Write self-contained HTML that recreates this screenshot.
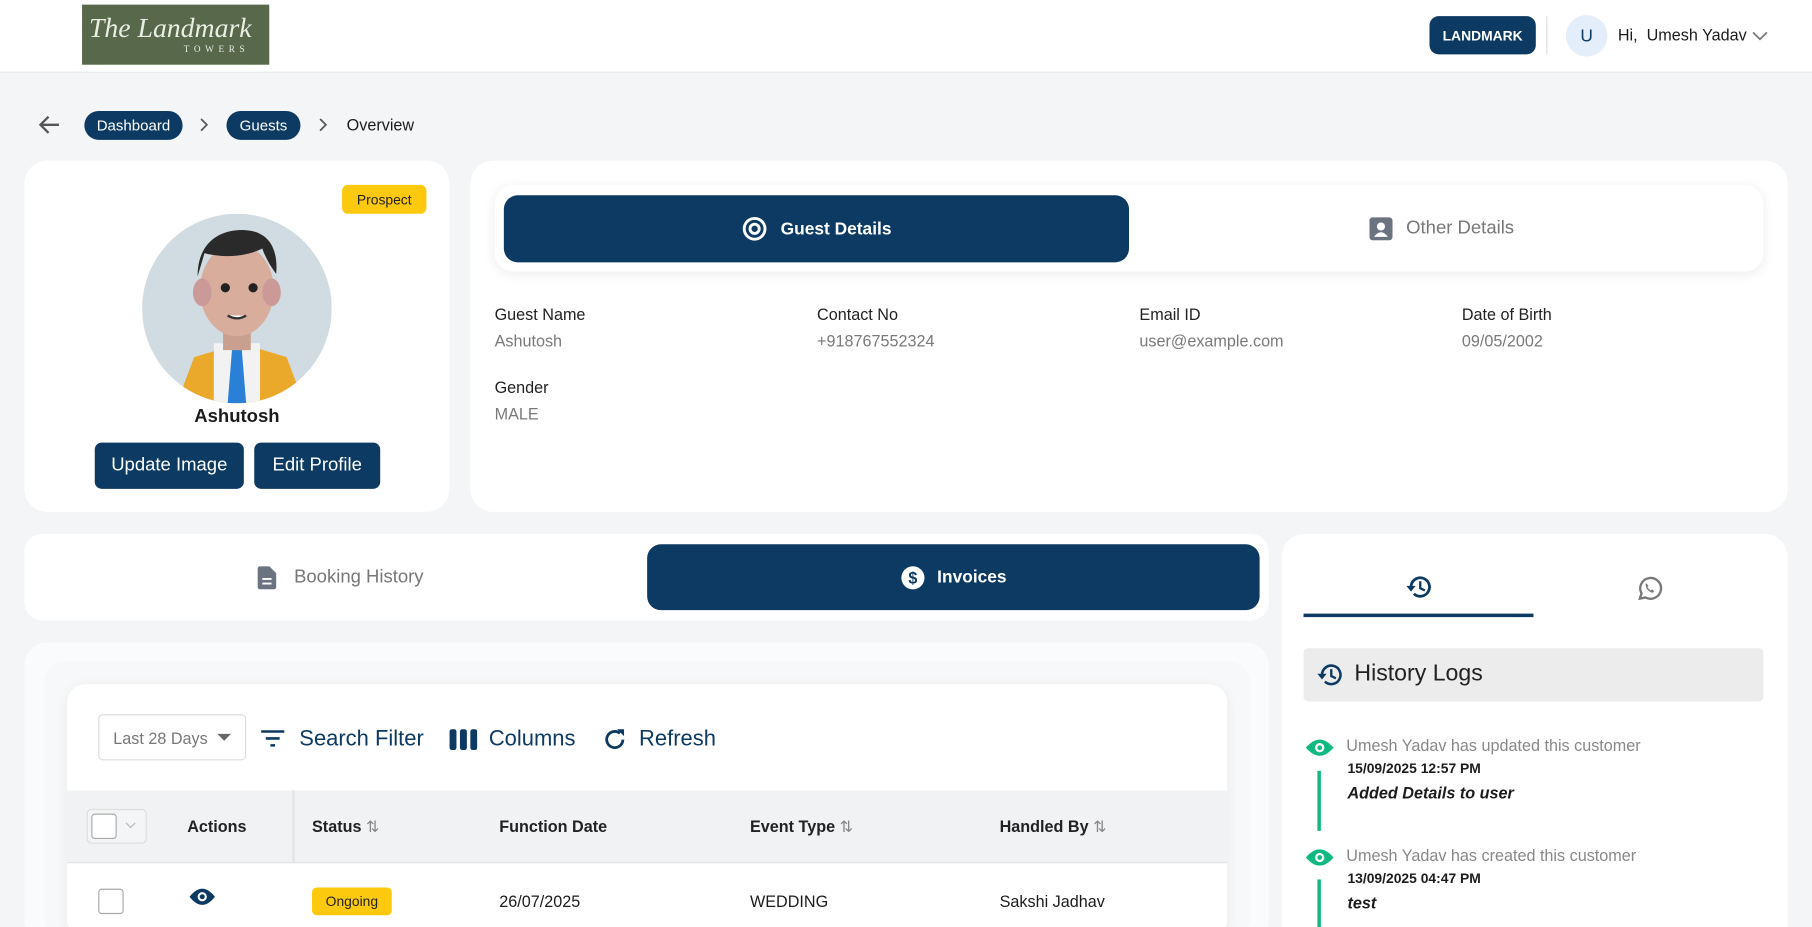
<!DOCTYPE html>
<html><head><meta charset="utf-8"><style>
*{box-sizing:border-box;margin:0;padding:0}
html,body{width:1812px;height:927px;overflow:hidden;background:#f3f5f6;font-family:"Liberation Sans",sans-serif}
#w{width:1568px;height:802px;transform:scale(1.15561);transform-origin:0 0;position:relative;color:#1c1c1c}
.a{position:absolute}
.dk{background:#0d3a63;color:#fff}
.card{background:#fff;border-radius:20px}
.t{font-size:14px;white-space:nowrap}
.lab{font-size:14px;color:#222}
.val{font-size:14px;color:#7a7a7a}
.btn{border-radius:6px;font-size:16px;display:flex;align-items:center;justify-content:center}
</style></head><body><div id="w">
<div class="a" style="left:0;top:0;width:1568px;height:63px;background:#fff;border-bottom:1px solid #e6e8ea"></div>
<div class="a" style="left:71px;top:4px;width:162px;height:52px;background:#58694b;color:#e9ede4;font-family:'Liberation Serif',serif">
<div class="a" style="left:6px;top:8px;font-size:24px;font-style:italic">The Landmark</div>
<div class="a" style="left:88px;top:34px;font-size:8px;letter-spacing:4px">TOWERS</div></div>
<div class="a dk btn" style="left:1237px;top:14px;width:92px;height:33px;border-radius:8px;font-size:12px;font-weight:bold">LANDMARK</div>
<div class="a" style="left:1338px;top:14px;width:1px;height:33px;background:#ddd"></div>
<div class="a" style="left:1355px;top:13px;width:36px;height:36px;border-radius:50%;background:#e3eefa;color:#0d3a63;font-size:15px;display:flex;align-items:center;justify-content:center">U</div>
<div class="a t" style="left:1400px;top:22px;font-size:14px">Hi,&nbsp; Umesh Yadav</div>
<svg class="a" style="left:1516px;top:26px" width="14" height="10"><path d="M1 2l6 6 6-6" stroke="#777" fill="none" stroke-width="1.5"/></svg>
<svg class="a" style="left:32px;top:99px" width="20" height="18"><path d="M19 9H3M10 2L3 9l7 7" stroke="#555" fill="none" stroke-width="2"/></svg>
<div class="a dk btn" style="left:73px;top:96px;width:85px;height:25px;border-radius:13px;font-size:13px">Dashboard</div>
<svg class="a" style="left:172px;top:102px" width="10" height="12"><path d="M2 1l5 5-5 5" stroke="#555" fill="none" stroke-width="1.5"/></svg>
<div class="a dk btn" style="left:196px;top:96px;width:64px;height:25px;border-radius:13px;font-size:13px">Guests</div>
<svg class="a" style="left:275px;top:102px" width="10" height="12"><path d="M2 1l5 5-5 5" stroke="#555" fill="none" stroke-width="1.5"/></svg>
<div class="a t" style="left:300px;top:100px">Overview</div>

<div class="a card" style="left:21px;top:139px;width:368px;height:304px"></div>
<div class="a btn" style="left:296px;top:160px;width:73px;height:25px;background:#fdc90f;font-size:12px;border-radius:5px;color:#222">Prospect</div>
<svg class="a" style="left:123px;top:185px" width="164" height="164"><defs><clipPath id="c"><circle cx="82" cy="82" r="82"/></clipPath></defs><g clip-path="url(#c)"><rect width="164" height="164" fill="#d0dbe2"/><path d="M30 164l15-40 40-12 40 12 15 40z" fill="#eaa92a"/><rect x="62" y="112" width="40" height="52" fill="#f2f2f2"/><path d="M78 115h8l4 49h-16z" fill="#2a7fd6"/><rect x="70" y="92" width="24" height="26" fill="#c9a090"/><ellipse cx="82" cy="66" rx="32" ry="40" fill="#d9ad9c"/><ellipse cx="52" cy="68" rx="8" ry="12" fill="#c99"/><ellipse cx="112" cy="68" rx="8" ry="12" fill="#c99"/><path d="M48 54c0-30 20-40 38-40 22 0 32 14 30 38-6-8-10-16-12-22-16 8-36 8-50 4z" fill="#2a2a2a"/><circle cx="72" cy="64" r="4" fill="#222"/><circle cx="96" cy="64" r="4" fill="#222"/><path d="M74 88q8 5 16 0" stroke="#333" stroke-width="2" fill="#fff"/></g></svg>
<div class="a" style="left:21px;top:352px;width:368px;text-align:center;font-weight:bold;font-size:16px">Ashutosh</div>
<div class="a dk btn" style="left:82px;top:383px;width:129px;height:40px">Update Image</div>
<div class="a dk btn" style="left:220px;top:383px;width:109px;height:40px">Edit Profile</div>

<div class="a card" style="left:407px;top:139px;width:1140px;height:304px"></div>
<div class="a" style="left:428px;top:160px;width:1098px;height:75px;background:#fff;border-radius:16px;box-shadow:0 2px 10px rgba(0,0,0,.08)"></div>
<div class="a dk btn" style="left:436px;top:169px;width:541px;height:58px;border-radius:12px;font-weight:bold;font-size:15px"><svg width="22" height="22" style="margin-right:12px"><circle cx="11" cy="11" r="9" stroke="#fff" stroke-width="2.5" fill="none"/><circle cx="11" cy="11" r="4" stroke="#fff" stroke-width="2.5" fill="none"/></svg>Guest Details</div>
<div class="a btn" style="left:977px;top:169px;width:541px;height:58px;color:#777"><svg width="20" height="20" style="margin-right:12px"><rect width="20" height="20" rx="3" fill="#6b7280"/><circle cx="10" cy="8" r="3.5" fill="#fff"/><path d="M4 17q6-8 12 0" fill="#fff"/></svg>Other Details</div>
<div class="a lab" style="left:428px;top:264px">Guest Name</div><div class="a val" style="left:428px;top:287px">Ashutosh</div>
<div class="a lab" style="left:707px;top:264px">Contact No</div><div class="a val" style="left:707px;top:287px">+918767552324</div>
<div class="a lab" style="left:986px;top:264px">Email ID</div><div class="a val" style="left:986px;top:287px">user@example.com</div>
<div class="a lab" style="left:1265px;top:264px">Date of Birth</div><div class="a val" style="left:1265px;top:287px">09/05/2002</div>
<div class="a lab" style="left:428px;top:327px">Gender</div><div class="a val" style="left:428px;top:350px">MALE</div>

<div class="a card" style="left:21px;top:462px;width:1077px;height:75px;border-radius:16px"></div>
<div class="a btn" style="left:29px;top:471px;width:531px;height:57px;color:#777"><svg width="18" height="20" style="margin-right:14px"><path d="M1 2a2 2 0 012-2h8l6 6v12a2 2 0 01-2 2H3a2 2 0 01-2-2z" fill="#6b7280"/><path d="M5 11h8M5 15h8" stroke="#fff" stroke-width="1.6"/></svg>Booking History</div>
<div class="a dk btn" style="left:560px;top:471px;width:530px;height:57px;border-radius:12px;font-weight:bold;font-size:15px"><svg width="22" height="22" style="margin-right:10px"><circle cx="11" cy="11" r="10" fill="#fff"/><text x="11" y="16" font-size="14" font-weight="bold" text-anchor="middle" fill="#0d3a63" font-family="Liberation Sans">$</text></svg>Invoices</div>

<div class="a" style="left:21px;top:556px;width:1077px;height:260px;background:#fafbfc;border-radius:20px"></div>
<div class="a" style="left:38px;top:572px;width:1044px;height:240px;background:#f7f8f9;border-radius:20px"></div>
<div class="a" style="left:58px;top:592px;width:1004px;height:220px;background:#fff;border-radius:16px;box-shadow:0 2px 10px rgba(0,0,0,.06)"></div>
<div class="a" style="left:85px;top:618px;width:128px;height:40px;border:1px solid #ddd;border-radius:4px"></div>
<div class="a t" style="left:98px;top:631px;color:#777">Last 28 Days</div>
<svg class="a" style="left:188px;top:635px" width="12" height="7"><path d="M0 0h12L6 6z" fill="#666"/></svg>
<svg class="a" style="left:225px;top:631px" width="22" height="16"><path d="M1 2h20M5 8h12M9 14h4" stroke="#0d3a63" stroke-width="2.2"/></svg>
<div class="a t" style="left:259px;top:629px;font-size:19px;color:#0d3a63">Search Filter</div>
<svg class="a" style="left:389px;top:630px" width="24" height="20"><rect x="0" y="1" width="6" height="18" rx="2" fill="#0d3a63"/><rect x="9" y="1" width="6" height="18" rx="2" fill="#0d3a63"/><rect x="18" y="1" width="6" height="18" rx="2" fill="#0d3a63"/></svg>
<div class="a t" style="left:423px;top:629px;font-size:19px;color:#0d3a63">Columns</div>
<svg class="a" style="left:521px;top:629px" width="22" height="22"><path d="M18 11a7 7 0 1 1-2.5-5.4" stroke="#0d3a63" stroke-width="2.4" fill="none"/><path d="M13 2h6v6z" fill="#0d3a63"/></svg>
<div class="a t" style="left:553px;top:629px;font-size:19px;color:#0d3a63">Refresh</div>
<div class="a" style="left:58px;top:684px;width:1004px;height:63px;background:#f0f2f4;border-bottom:1px solid #e2e4e6"></div>
<div class="a" style="left:253px;top:684px;width:2px;height:63px;background:#e2e4e6"></div>
<div class="a" style="left:75px;top:700px;width:52px;height:30px;border:1px solid #ddd;border-radius:4px;background:#f4f5f6"></div>
<div class="a" style="left:79px;top:704px;width:22px;height:22px;border:1px solid #aaa;border-radius:3px;background:#fff"></div>
<svg class="a" style="left:108px;top:711px" width="10" height="7"><path d="M1 1l4 4 4-4" stroke="#bbb" fill="none"/></svg>
<div class="a t" style="left:162px;top:707px;font-weight:bold;color:#222">Actions</div>
<div class="a t" style="left:270px;top:707px;font-weight:bold;color:#222">Status <span style="color:#888;font-weight:normal">⇅</span></div>
<div class="a t" style="left:432px;top:707px;font-weight:bold;color:#222">Function Date</div>
<div class="a t" style="left:649px;top:707px;font-weight:bold;color:#222">Event Type <span style="color:#888;font-weight:normal">⇅</span></div>
<div class="a t" style="left:865px;top:707px;font-weight:bold;color:#222">Handled By <span style="color:#888;font-weight:normal">⇅</span></div>
<div class="a" style="left:85px;top:769px;width:22px;height:22px;border:1px solid #aaa;border-radius:3px"></div>
<svg class="a" style="left:163px;top:768px" width="24" height="16"><path d="M1 8q11-14 22 0q-11 14-22 0z" fill="#0d3a63"/><circle cx="12" cy="8" r="4" fill="#fff"/><circle cx="12" cy="8" r="2.2" fill="#0d3a63"/></svg>
<div class="a btn" style="left:270px;top:768px;width:69px;height:24px;background:#fdc90f;font-size:12px;border-radius:4px;color:#222">Ongoing</div>
<div class="a t" style="left:432px;top:772px">26/07/2025</div>
<div class="a t" style="left:649px;top:772px">WEDDING</div>
<div class="a t" style="left:865px;top:772px">Sakshi Jadhav</div>

<div class="a card" style="left:1109px;top:462px;width:438px;height:360px"></div>
<svg class="a" style="left:1216px;top:497px" width="24" height="22"><path d="M5 11a8 8 0 1 1 2.5 5.8" stroke="#0d3a63" stroke-width="2.4" fill="none"/><path d="M1 10h8l-4 5z" fill="#0d3a63"/><path d="M13 6v6l4 2" stroke="#0d3a63" stroke-width="2" fill="none"/></svg>
<svg class="a" style="left:1415px;top:497px" width="24" height="24"><path d="M4 21l1.5-4.5A9 9 0 1 1 9 20z" stroke="#777" stroke-width="2" fill="none"/><path d="M9 8q0 6 6 8l1.5-1.5-2-1.5-1 1q-2-1-3-3l1-1-1.5-2z" fill="#777"/></svg>
<div class="a" style="left:1128px;top:531px;width:199px;height:3px;background:#0d3a63"></div>
<div class="a" style="left:1128px;top:561px;width:398px;height:46px;background:#ececec;border-radius:4px"></div>
<svg class="a" style="left:1139px;top:573px" width="24" height="22"><path d="M5 11a8 8 0 1 1 2.5 5.8" stroke="#0d3a63" stroke-width="2.2" fill="none"/><path d="M1 10h8l-4 5z" fill="#0d3a63"/><path d="M13 6v6l4 2" stroke="#0d3a63" stroke-width="2" fill="none"/></svg>
<div class="a t" style="left:1172px;top:572px;font-size:20px;color:#222">History Logs</div>
<svg class="a" style="left:1129px;top:639px" width="26" height="16"><path d="M1 8q12-14 24 0q-12 14-24 0z" fill="#10b981"/><circle cx="13" cy="8" r="4" fill="#fff"/><circle cx="13" cy="8" r="2" fill="#10b981"/></svg>
<div class="a" style="left:1140px;top:667px;width:3px;height:52px;background:#10b981"></div>
<div class="a t" style="left:1165px;top:637px;color:#888">Umesh Yadav has updated this customer</div>
<div class="a t" style="left:1166px;top:658px;font-size:12px;font-weight:bold">15/09/2025 12:57 PM</div>
<div class="a t" style="left:1166px;top:678px;font-style:italic;font-weight:bold">Added Details to user</div>
<svg class="a" style="left:1129px;top:734px" width="26" height="16"><path d="M1 8q12-14 24 0q-12 14-24 0z" fill="#10b981"/><circle cx="13" cy="8" r="4" fill="#fff"/><circle cx="13" cy="8" r="2" fill="#10b981"/></svg>
<div class="a" style="left:1140px;top:761px;width:3px;height:45px;background:#10b981"></div>
<div class="a t" style="left:1165px;top:732px;color:#888">Umesh Yadav has created this customer</div>
<div class="a t" style="left:1166px;top:753px;font-size:12px;font-weight:bold">13/09/2025 04:47 PM</div>
<div class="a t" style="left:1166px;top:773px;font-style:italic;font-weight:bold">test</div>
</div></body></html>
